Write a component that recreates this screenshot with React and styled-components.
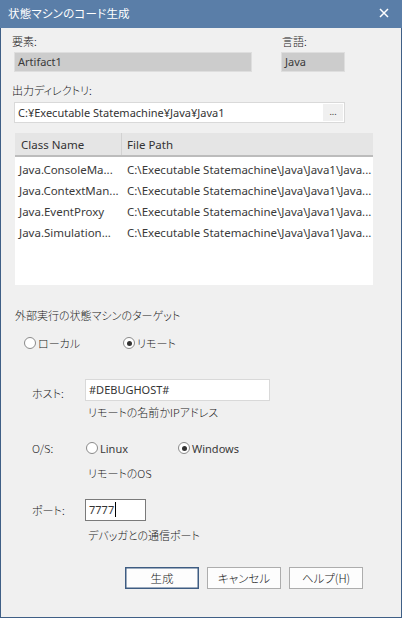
import React from "react";
import styled, { createGlobalStyle } from "styled-components";

const GlobalStyle = createGlobalStyle`
  html, body { margin: 0; padding: 0; background: #f0f0f0; }
  body {
    font-family: "Noto Sans", "Noto Sans CJK JP", sans-serif;
    color: #333;
  }
  * { box-sizing: border-box; }
`;

const Window = styled.div`
  width: 402px;
  height: 618px;
  display: flex;
  flex-direction: column;
  background: #f0f0f0;
  overflow: hidden;
`;

const TitleBar = styled.div`
  height: 28px;
  flex: none;
  background: #5a7ea8;
  display: flex;
  align-items: center;
  justify-content: space-between;
  padding: 0 13px 2px 8px;
  color: #fff;
`;

const Title = styled.span`
  font-family: "Noto Sans CJK JP", sans-serif;
  font-size: 11.5px;
  font-feature-settings: "palt";
  letter-spacing: 0.2px;
`;

const CloseButton = styled.svg`
  width: 10px;
  height: 10px;
  display: block;
`;

const Body = styled.div`
  flex: 1;
  display: flex;
  flex-direction: column;
  border: 1px solid #3f5f86;
  border-top: none;
`;

const Label = styled.div`
  font-family: "Noto Sans CJK JP", sans-serif;
  font-feature-settings: "palt";
  font-weight: 300;
  font-size: 11px;
  line-height: 16px;
  height: 16px;
  color: #1a1a1a;
  white-space: nowrap;
  margin-top: ${(p) => p.$top || 0}px;
  margin-left: ${(p) => p.$left || 0}px;
  width: ${(p) => (p.$width ? `${p.$width}px` : "auto")};
  flex: none;
`;

const TopRow = styled.div`
  display: flex;
  margin-top: 5px;
  margin-left: 11px;
  gap: 29px;
`;

const Group = styled.div`
  display: flex;
  flex-direction: column;
  width: ${(p) => p.$width}px;
`;

const ReadOnlyField = styled.div`
  margin-top: 3px;
  margin-left: ${(p) => p.$left || 0}px;
  width: ${(p) => p.$width}px;
  height: 20px;
  border: 1px solid #dedede;
  background: #cccccc;
  font-size: 11px;
  line-height: 18px;
  padding-left: 3px;
  color: #3a3a3a;
  white-space: nowrap;
  overflow: hidden;
`;

const DirField = styled.div`
  margin-top: 4px;
  margin-left: 13px;
  width: 331px;
  height: 21px;
  border: 1px solid #d9d9d9;
  background: #fff;
  display: flex;
  align-items: center;
  justify-content: space-between;
  padding: 0 0 0 3px;
  font-size: 11px;
  color: #333;
`;

const BrowseButton = styled.div`
  width: 20px;
  height: 17px;
  margin-right: 1px;
  background: #f0f0f0;
  display: flex;
  align-items: center;
  justify-content: center;
  font-size: 9px;
  line-height: 1;
  padding-bottom: 2px;
  color: #333;
`;

const List = styled.div`
  margin-top: 10px;
  margin-left: 14px;
  width: 358px;
  height: 152px;
  background: #fff;
  display: flex;
  flex-direction: column;
  font-size: 11.5px;
`;

const ListHeader = styled.div`
  height: 24px;
  flex: none;
  background: #e5e5e5;
  border-bottom: 2px solid #bcbcbc;
  display: grid;
  grid-template-columns: 107px 1fr;
`;

const HeaderCell = styled.div`
  display: flex;
  align-items: center;
  padding-left: ${(p) => p.$pad}px;
  border-right: ${(p) => (p.$divider ? "1px solid #d2d2d2" : "none")};
  color: #333;
`;

const Rows = styled.div`
  padding-top: 2px;
  display: flex;
  flex-direction: column;
`;

const Row = styled.div`
  height: 21px;
  display: grid;
  grid-template-columns: 107px 1fr;
  align-items: center;
`;

const Cell = styled.div`
  padding-left: ${(p) => p.$pad}px;
  white-space: nowrap;
  overflow: hidden;
  color: #3a3a3a;
`;

const RadioRow = styled.div`
  display: flex;
  align-items: center;
  height: 16px;
  margin-top: ${(p) => p.$top || 0}px;
  margin-left: ${(p) => p.$left || 0}px;
`;

const RadioItem = styled.label`
  display: flex;
  align-items: center;
  gap: 2px;
  width: ${(p) => (p.$width ? `${p.$width}px` : "auto")};
  font-family: "Noto Sans", "Noto Sans CJK JP", sans-serif;
  font-feature-settings: "palt";
  font-weight: ${(p) => (p.$latin ? 400 : 300)};
  font-size: 11px;
  color: ${(p) => (p.$latin ? "#3a3a3a" : "#1a1a1a")};
  white-space: nowrap;
`;

const RadioCircle = styled.span`
  width: 12px;
  height: 12px;
  flex: none;
  border-radius: 50%;
  border: 1px solid #8a8a8a;
  background: #fff;
  display: flex;
  align-items: center;
  justify-content: center;
  &::after {
    content: "";
    width: 5px;
    height: 5px;
    border-radius: 50%;
    background: ${(p) => (p.$checked ? "#333" : "transparent")};
  }
`;

const FormRow = styled.div`
  display: flex;
  align-items: flex-start;
  margin-top: ${(p) => p.$top || 0}px;
  margin-left: 31px;
`;

const TextInput = styled.div`
  width: ${(p) => p.$width}px;
  height: 22px;
  border: 1px solid ${(p) => (p.$focused ? "#7a7a7a" : "#d9d9d9")};
  background: #fff;
  display: flex;
  align-items: center;
  padding-left: 3px;
  padding-bottom: 1px;
  font-size: 11px;
  color: #333;
`;

const Caret = styled.span`
  display: inline-block;
  width: 1px;
  height: 15px;
  background: #000;
  margin-left: 1px;
`;

const Hint = styled(Label)`
  margin-left: 87px;
`;

const ButtonRow = styled.div`
  display: flex;
  gap: 8px;
  margin-top: 24px;
  margin-left: 124px;
`;

const Button = styled.div`
  width: 74px;
  height: 22px;
  border: 1px solid ${(p) => (p.$primary ? "#3e5c82" : "#adadad")};
  box-shadow: ${(p) => (p.$primary ? "inset 0 0 0 0.5px #3e5c82" : "none")};
  background: #fdfdfd;
  display: flex;
  align-items: center;
  justify-content: center;
  font-family: "Noto Sans CJK JP", sans-serif;
  font-feature-settings: "palt";
  font-weight: 300;
  font-size: 11.5px;
  color: #1a1a1a;
  padding-bottom: 1px;
`;

const rows = [
  ["Java.ConsoleMa...", "C:\\Executable Statemachine\\Java\\Java1\\Java..."],
  ["Java.ContextMan...", "C:\\Executable Statemachine\\Java\\Java1\\Java..."],
  ["Java.EventProxy", "C:\\Executable Statemachine\\Java\\Java1\\Java..."],
  ["Java.Simulation...", "C:\\Executable Statemachine\\Java\\Java1\\Java..."],
];

export default function App() {
  return (
    <>
      <GlobalStyle />
      <Window>
        <TitleBar>
          <Title>状態マシンのコード生成</Title>
          <CloseButton viewBox="0 0 10 10">
            <path d="M1 1 L9 9 M9 1 L1 9" stroke="#fff" strokeWidth="1.5" />
          </CloseButton>
        </TitleBar>
        <Body>
          <TopRow>
            <Group $width={240}>
              <Label>要素:</Label>
              <ReadOnlyField $left={2} $width={238}>Artifact1</ReadOnlyField>
            </Group>
            <Group $width={65}>
              <Label $left={1}>言語:</Label>
              <ReadOnlyField $width={64}>Java</ReadOnlyField>
            </Group>
          </TopRow>

          <Label $top={10} $left={11}>出力ディレクトリ:</Label>
          <DirField>
            <span>C:¥Executable Statemachine¥Java¥Java1</span>
            <BrowseButton>...</BrowseButton>
          </DirField>

          <List>
            <ListHeader>
              <HeaderCell $pad={6} $divider>Class Name</HeaderCell>
              <HeaderCell $pad={5}>File Path</HeaderCell>
            </ListHeader>
            <Rows>
              {rows.map(([name, path]) => (
                <Row key={name}>
                  <Cell $pad={4}>{name}</Cell>
                  <Cell $pad={5}>{path}</Cell>
                </Row>
              ))}
            </Rows>
          </List>

          <Label $top={22} $left={14}>外部実行の状態マシンのターゲット</Label>
          <RadioRow $top={12} $left={23}>
            <RadioItem $width={99}>
              <RadioCircle />
              ローカル
            </RadioItem>
            <RadioItem>
              <RadioCircle $checked />
              リモート
            </RadioItem>
          </RadioRow>

          <FormRow $top={28}>
            <Label $width={53} $top={6}>ホスト:</Label>
            <TextInput $width={185}>#DEBUGHOST#</TextInput>
          </FormRow>
          <Hint $top={3}>リモートの名前かIPアドレス</Hint>

          <FormRow $top={20}>
            <Label $width={54}>O/S:</Label>
            <RadioRow>
              <RadioItem $width={92} $latin>
                <RadioCircle />
                Linux
              </RadioItem>
              <RadioItem $latin>
                <RadioCircle $checked />
                Windows
              </RadioItem>
            </RadioRow>
          </FormRow>
          <Hint $top={9}>リモートのOS</Hint>

          <FormRow $top={18}>
            <Label $width={53} $top={3}>ポート:</Label>
            <TextInput $width={61} $focused>
              7777<Caret />
            </TextInput>
          </FormRow>
          <Hint $top={6}>デバッガとの通信ポート</Hint>

          <ButtonRow>
            <Button $primary>生成</Button>
            <Button>キャンセル</Button>
            <Button>ヘルプ(H)</Button>
          </ButtonRow>
        </Body>
      </Window>
    </>
  );
}
